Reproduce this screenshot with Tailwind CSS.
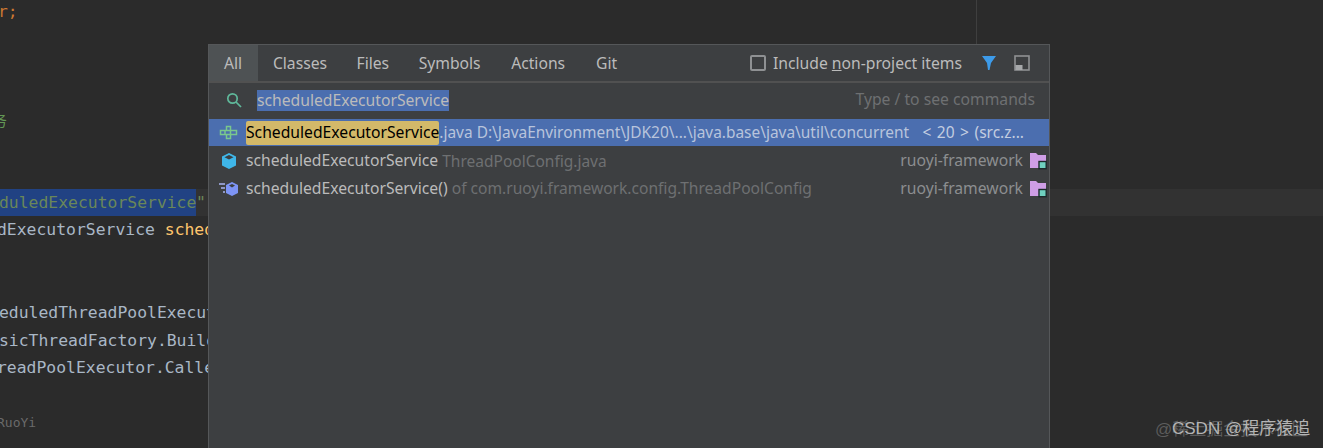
<!doctype html>
<html lang="en">
  <head>
    <meta charset="UTF-8" />
    <title>Search Everywhere</title>
    <script src="https://cdn.jsdelivr.net/npm/@tailwindcss/browser@4"></script>
  </head>
  <body class="bg-[#2b2b2b]">
    <div class="relative h-[448px] w-[1323px] overflow-hidden bg-[#2b2b2b]">
      <!-- editor -->
      <div class="absolute left-[976px] top-0 h-[44px] w-px bg-[#3f3f3f]"></div>
      <div class="font-['DejaVu_Sans_Mono',monospace] text-[16.4px] leading-[27.6px] text-[#a9b7c6] whitespace-nowrap">
        <div class="h-[25px] -mt-[2px] ml-[-2px] text-[#cc7832]">r;</div>
        <div class="h-[27.6px]"></div>
        <div class="h-[27.6px]"></div>
        <div class="h-[27.6px]"></div>
        <div class="h-[27.6px] ml-[-8px] font-['Noto_Sans_CJK_SC',sans-serif] text-[15px] text-[#629755]">务</div>
        <div class="h-[27.6px]"></div>
        <div class="h-[27.6px]"></div>
        <div class="h-[27.6px] bg-[#323232] text-[#6a8759]"><span class="inline-block h-[27.6px] w-[196px] overflow-hidden bg-[#214283] align-top"><span class="block ml-[-1px]">duledExecutorService</span></span>"</div>
        <div class="h-[27.6px] ml-[-3px]">dExecutorService <span class="text-[#ffc66d]">scheduledExecutorService</span></div>
        <div class="h-[27.6px]"></div>
        <div class="h-[27.6px]"></div>
        <div class="h-[27.6px] ml-[-1px]">eduledThreadPoolExecutor</div>
        <div class="h-[27.6px] ml-[-1px]">sicThreadFactory.Builder</div>
        <div class="h-[27.6px] ml-[-3px]">readPoolExecutor.CallerRuns</div>
        <div class="h-[27.6px]"></div>
        <div class="h-[27.6px] ml-[-3px] text-[13px] text-[#6a6a6a]">RuoYi</div>
      </div>

      <!-- search everywhere popup -->
      <div class="absolute left-[208px] top-[44px] h-[420px] w-[842px] border border-[#555759] bg-[#3d3f41] font-['Noto_Sans',sans-serif] text-[15.7px] text-[#bbbbbb]">
        <div class="flex h-[38px] items-center border-b-2 border-[#515151]">
          <div class="flex h-full items-center bg-[#4e5254] pl-[15px] pr-[16px] pt-[1px]">All</div>
          <div class="flex items-center px-[14.75px] pt-[1px]">Classes</div>
          <div class="flex items-center px-[14.75px] pt-[1px]">Files</div>
          <div class="flex items-center pl-[14.75px] pr-[15.75px] pt-[1px]">Symbols</div>
          <div class="flex items-center pl-[14.75px] pr-[16.25px] pt-[1px]">Actions</div>
          <div class="flex items-center px-[14.75px] pt-[1px]">Git</div>
          <div class="ml-auto flex items-center pr-[19px] pt-[1px]">
            <span class="h-[16px] w-[16px] rounded-[2px] border-2 border-[#8f9193]"></span>
            <span class="ml-[7px]">Include <span class="underline">n</span>on-project items</span>
            <svg class="ml-[19px]" width="16" height="16" viewBox="0 0 16 16"><path d="M1 1h14L10 8 8.5 15 7 15 6 8Z" fill="#3d9be9" /></svg>
            <svg class="ml-[17px]" width="16" height="16" viewBox="0 0 16 16"><rect x="1" y="1" width="14" height="14" fill="none" stroke="#8f9193" stroke-width="1.6" /><rect x="1.5" y="10" width="7" height="5" fill="#a6a8aa" /></svg>
          </div>
        </div>
        <div class="flex h-[36px] items-center pb-[2px] pl-[16px] pr-[14px]">
          <svg width="18" height="18" viewBox="0 0 18 18" fill="none" stroke="#5fb89a" stroke-width="1.7"><circle cx="7.5" cy="7.5" r="4.7" /><path d="M11 11l5 5" /></svg>
          <span class="ml-[14px] bg-[#4b6eaf] leading-[21px] text-[#bbbbbb]">scheduledExecutorService</span>
          <span class="ml-auto text-[#6e7072]">Type / to see commands</span>
        </div>
        <div class="flex h-[27px] items-center whitespace-pre bg-[#4b6eaf] pl-[10px] pr-[25px] pt-[1px]">
          <svg width="20" height="16" viewBox="0 0 20 16" fill="none" stroke="#79c88d" stroke-width="1.5"><path d="M7.5 1.5h4v4h-4zM1.5 5.5h16v4h-16zM6 5.5v4M11.5 5.5v4M7.5 9.5h4v4h-4z" /></svg>
          <span class="ml-[7px] rounded-[2px] bg-[#d3b969] text-black">ScheduledExecutorService</span><span class="text-[15.45px] text-[#b8c4dc]">.java D:\JavaEnvironment\JDK20\...\java.base\java\util\concurrent</span>
          <span class="ml-auto text-[15.5px] text-[#c3cde0] [word-spacing:1.5px]">&lt; 20 &gt; (src.z...</span>
        </div>
        <div class="flex h-[27.5px] items-center whitespace-pre pl-[10px] pr-[2px] pt-[3px]">
          <svg class="ml-[1px]" width="18" height="18" viewBox="0 0 18 18"><path d="M9 1l7 3.6v8.8L9 17l-7-3.6V4.6Z" fill="#3fb6e8" /><path d="M4.5 5.2L9 3l4.5 2.2L9 7.6Z" fill="#3c3f41" /></svg>
          <span class="ml-[8px]">scheduledExecutorService</span><span class="text-[15.5px] text-[#6e7072]"> ThreadPoolConfig.java</span>
          <span class="ml-auto text-[#8c8e90]">ruoyi-framework</span>
          <svg class="ml-[6px]" width="18" height="18" viewBox="0 0 18 18"><path d="M1 1h6l2 2h8v13H1Z" fill="#cf9ee6" /><rect x="10" y="9.5" width="7.2" height="7.2" fill="#6fd0bf" stroke="#1c2a2a" stroke-width="1.4" /></svg>
        </div>
        <div class="flex h-[27.5px] items-center whitespace-pre pl-[9px] pr-[2px] pt-[3px]">
          <svg width="20" height="18" viewBox="0 0 20 18"><path d="M1 4h6M3 8h4M5 12h2" stroke="#a8b4f0" stroke-width="1.5" /><path d="M14 2l6 3v8l-6 3-6-3V5Z" fill="#7d94f5" /><path d="M11 5.5L14 4l3 1.5L14 7.5Z" fill="#3c3f41" /></svg>
          <span class="ml-[8px]">scheduledExecutorService()</span><span class="text-[15.6px] text-[#6e7072]"> of com.ruoyi.framework.config.ThreadPoolConfig</span>
          <span class="ml-auto text-[#8c8e90]">ruoyi-framework</span>
          <svg class="ml-[6px]" width="18" height="18" viewBox="0 0 18 18"><path d="M1 1h6l2 2h8v13H1Z" fill="#cf9ee6" /><rect x="10" y="9.5" width="7.2" height="7.2" fill="#6fd0bf" stroke="#1c2a2a" stroke-width="1.4" /></svg>
        </div>
      </div>

      <!-- watermark -->
      <div class="absolute left-[1155px] top-[420px] font-['Liberation_Sans','Noto_Sans_CJK_SC',sans-serif] text-[17px] leading-[20px] text-[#5c5c5c]">@稀土掘金技术社区</div>
      <div class="absolute left-[1172px] top-[419px] font-['Liberation_Sans','Noto_Sans_CJK_SC',sans-serif] text-[17px] leading-[20px] text-[#b4b4b4]">CSDN @程序猿追</div>
    </div>
  </body>
</html>
